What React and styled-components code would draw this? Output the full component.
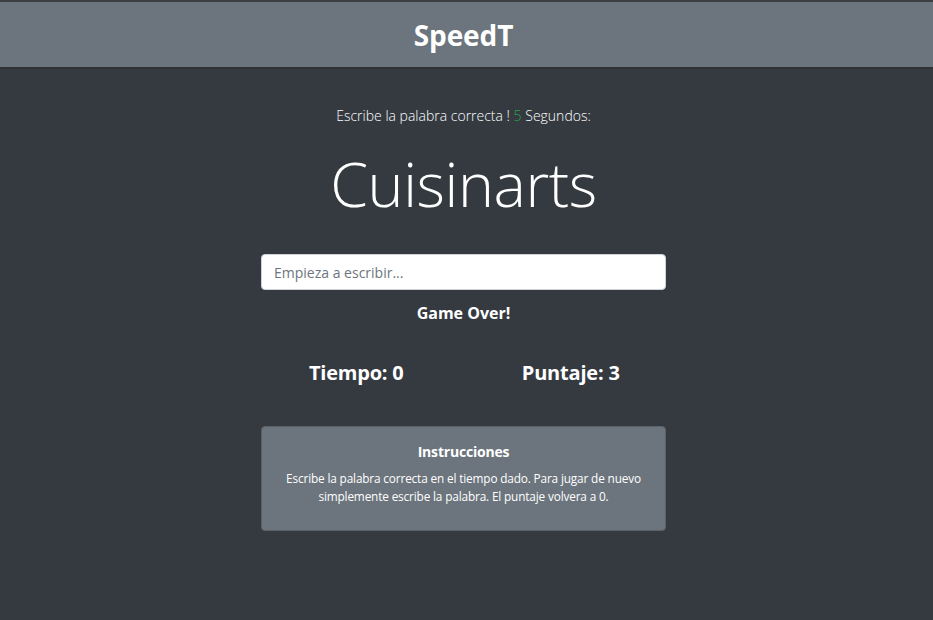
import React from "react";
import styled, { createGlobalStyle } from "styled-components";

const Global = createGlobalStyle`
  html, body { margin: 0; padding: 0; background: #343a40; }
  body { font-family: "Open Sans", "Noto Sans", sans-serif; color: #fff; }
`;

const Page = styled.div`
  min-height: 620px;
  background: #343a40;
  border-top: 2px solid #3b3f44;
  box-sizing: border-box;
  padding-right: 6px;
`;

const Header = styled.header`
  height: 65px;
  margin-right: -6px;
  padding-right: 6px;
  background: #6c757d;
  border-bottom: 2px solid #2f3337;
  display: flex;
  align-items: center;
  justify-content: center;
`;

const Brand = styled.h1`
  margin: 0;
  font-size: 28px;
  font-weight: 700;
  color: #fff;
  letter-spacing: -0.1px;
`;

const Main = styled.main`
  width: 405px;
  margin: 0 auto;
  display: flex;
  flex-direction: column;
  align-items: stretch;
  text-align: center;
`;

const Lead = styled.p`
  margin: 37px 0 0;
  font-size: 14px;
  font-weight: 300;
  line-height: 20px;
`;

const Green = styled.span`
  color: #28a745;
`;

const Word = styled.h2`
  margin: 18px 0 0;
  font-size: 61px;
  font-weight: 300;
  line-height: 80px;
  letter-spacing: -0.4px;
`;

const Input = styled.input`
  margin-top: 30px;
  height: 36px;
  box-sizing: border-box;
  border: 1px solid #ced4da;
  border-radius: 4px;
  padding: 6px 12px;
  font-family: inherit;
  font-size: 14px;
  color: #495057;
  background: #fff;
  outline: none;
  &::placeholder { color: #6c757d; }
`;

const Status = styled.h5`
  margin: 11px 0 0;
  font-size: 16px;
  font-weight: 700;
  line-height: 24px;
`;

const Stats = styled.div`
  display: grid;
  grid-template-columns: 1fr 1fr;
  margin: 33px -12px 0;
`;

const Stat = styled.h3`
  margin: 0;
  font-size: 20px;
  font-weight: 700;
  line-height: 30px;
  letter-spacing: -0.2px;
`;

const Card = styled.section`
  margin-top: 38px;
  background: #6c757d;
  border: 1px solid #5a6268;
  border-radius: 4px;
  padding: 14px 14px 25px;
`;

const CardTitle = styled.h5`
  margin: 0 0 6px;
  font-size: 14px;
  font-weight: 700;
  line-height: 22px;
  letter-spacing: -0.2px;
`;

const CardText = styled.p`
  margin: 0;
  font-size: 11.8px;
  line-height: 18px;
  letter-spacing: -0.15px;
`;

export default function App() {
  return (
    <>
      <Global />
      <Page>
        <Header>
          <Brand>SpeedT</Brand>
        </Header>
        <Main>
          <Lead>
            Escribe la palabra correcta ! <Green>5</Green> Segundos:
          </Lead>
          <Word>Cuisinarts</Word>
          <Input placeholder="Empieza a escribir..." />
          <Status>Game Over!</Status>
          <Stats>
            <Stat>Tiempo: 0</Stat>
            <Stat>Puntaje: 3</Stat>
          </Stats>
          <Card>
            <CardTitle>Instrucciones</CardTitle>
            <CardText>
              Escribe la palabra correcta en el tiempo dado. Para jugar de nuevo
              simplemente escribe la palabra. El puntaje volvera a 0.
            </CardText>
          </Card>
        </Main>
      </Page>
    </>
  );
}
